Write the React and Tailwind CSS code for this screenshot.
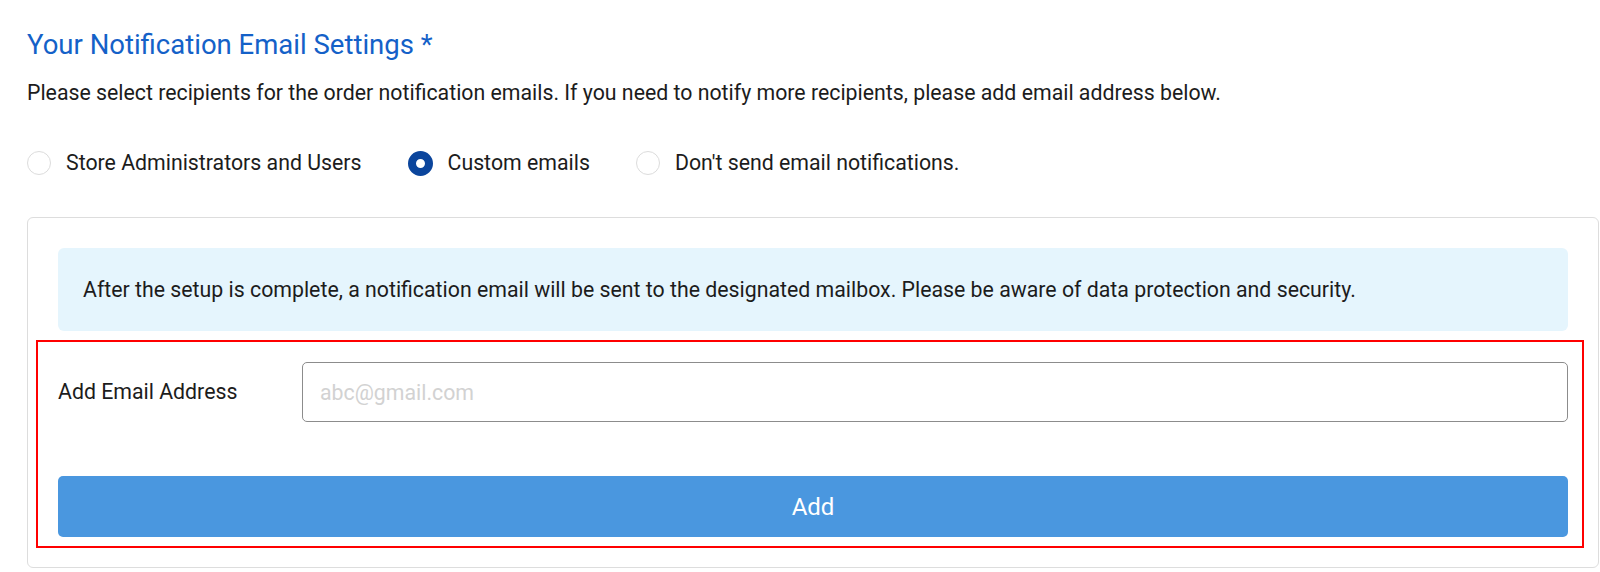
import React, { useState } from "react";

function Radio({ checked, label, onSelect }) {
  return (
    <label
      onClick={onSelect}
      className="flex items-center gap-[15px] cursor-pointer"
    >
      {checked ? (
        <span className="w-[25px] h-[25px] rounded-full border-[8px] border-[#0b459c] bg-white" />
      ) : (
        <span className="w-[24px] h-[24px] rounded-full border-[1.5px] border-[#dcdcdc] bg-white" />
      )}
      <span>{label}</span>
    </label>
  );
}

export default function App() {
  const [choice, setChoice] = useState("custom");
  const [email, setEmail] = useState("");

  return (
    <div className="bg-white w-[1600px] h-[572px] pl-[27px] pr-[1px] pt-[27px] text-[21.3px] text-[#1c1c1c] font-['Roboto',sans-serif]">
      <h2 className="text-[27.5px] leading-[36px] text-[#1461c8]">
        Your Notification Email Settings *
      </h2>
      <p className="mt-[16px] leading-[28px]">
        Please select recipients for the order notification emails. If you need
        to notify more recipients, please add email address below.
      </p>

      <div className="mt-[43px] flex items-center gap-[46px] h-[26px]">
        <Radio
          label="Store Administrators and Users"
          checked={choice === "admins"}
          onSelect={() => setChoice("admins")}
        />
        <Radio
          label="Custom emails"
          checked={choice === "custom"}
          onSelect={() => setChoice("custom")}
        />
        <Radio
          label="Don't send email notifications."
          checked={choice === "none"}
          onSelect={() => setChoice("none")}
        />
      </div>

      <div className="mt-[41px] border border-[#dddddd] rounded-[6px] p-[30px]">
        <div className="bg-[#e5f5fd] rounded-[6px] h-[83px] pl-[25px] flex items-center">
          After the setup is complete, a notification email will be sent to the
          designated mailbox. Please be aware of data protection and security.
        </div>

        <div className="relative mt-[31px]">
          <div className="flex items-center">
            <span className="w-[244px] shrink-0">Add Email Address</span>
            <input
              type="email"
              value={email}
              onChange={(e) => setEmail(e.target.value)}
              placeholder="abc@gmail.com"
              className="flex-1 h-[60px] border border-[#8c8c8c] rounded-[5px] px-[17px] placeholder:text-[#d2d2d2] outline-none"
            />
          </div>
          <button className="mt-[54px] w-full h-[61px] bg-[#4a97df] rounded-[5px] text-white text-[24px]">
            Add
          </button>
          <div className="absolute top-[-22px] bottom-[-11px] left-[-22px] right-[-16px] border-2 border-[#ff0000] pointer-events-none" />
        </div>
      </div>
    </div>
  );
}
